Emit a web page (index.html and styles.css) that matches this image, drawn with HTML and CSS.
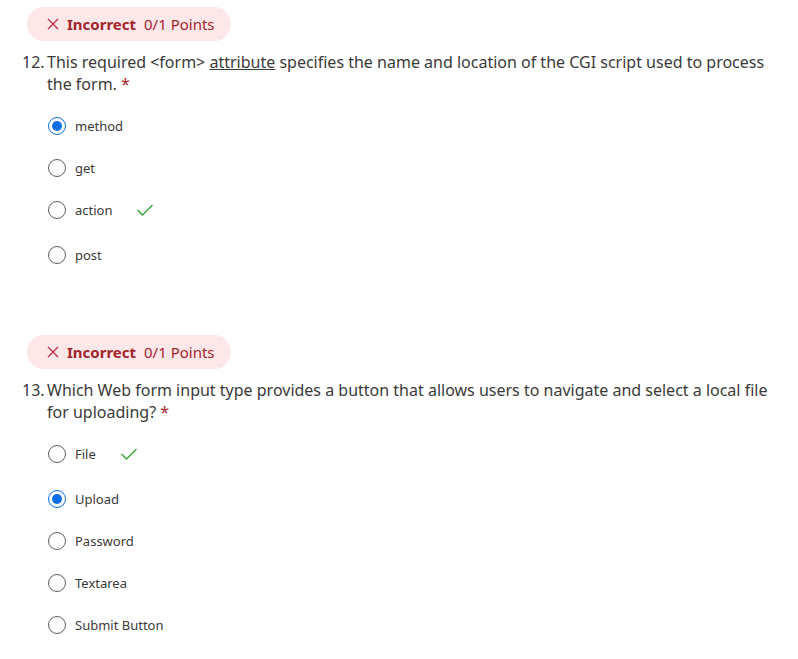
FILE: index.html
```html
<!DOCTYPE html>
<html>
<head>
<meta charset="utf-8">
<link rel="stylesheet" href="styles.css">
</head>
<body>
<div class="page">
  <section class="question">
    <div class="badge">
      <svg class="x-icon" width="12" height="12" viewBox="0 0 12 12"><path d="M1 1 L11 11 M11 1 L1 11" stroke="#c4314b" stroke-width="1.4" fill="none"/></svg>
      <span class="badge-strong">Incorrect</span>
      <span class="badge-points">0/1 Points</span>
    </div>
    <div class="qtext">
      <span class="qnum">12.</span>
      <span class="qbody">This required &lt;form&gt; <u>attribute</u> specifies the name and location of the CGI script used to process the form. <span class="req">*</span></span>
    </div>
    <div class="options">
      <div class="opt"><span class="radio checked"></span><span class="label">method</span></div>
      <div class="opt"><span class="radio"></span><span class="label">get</span></div>
      <div class="opt tall"><span class="radio"></span><span class="label">action</span><svg class="check" width="18" height="14" viewBox="0 0 18 14"><path d="M1.5 7 L6.5 12 L16.5 2" stroke="#3aa63a" stroke-width="1.4" fill="none"/></svg></div>
      <div class="opt"><span class="radio"></span><span class="label">post</span></div>
    </div>
  </section>
  <section class="question q2">
    <div class="badge">
      <svg class="x-icon" width="12" height="12" viewBox="0 0 12 12"><path d="M1 1 L11 11 M11 1 L1 11" stroke="#c4314b" stroke-width="1.4" fill="none"/></svg>
      <span class="badge-strong">Incorrect</span>
      <span class="badge-points">0/1 Points</span>
    </div>
    <div class="qtext">
      <span class="qnum">13.</span>
      <span class="qbody">Which Web form input type provides a button that allows users to navigate and select a local file for uploading? <span class="req">*</span></span>
    </div>
    <div class="options">
      <div class="opt tall"><span class="radio"></span><span class="label">File</span><svg class="check" width="18" height="14" viewBox="0 0 18 14"><path d="M1.5 7 L6.5 12 L16.5 2" stroke="#3aa63a" stroke-width="1.4" fill="none"/></svg></div>
      <div class="opt"><span class="radio checked"></span><span class="label">Upload</span></div>
      <div class="opt"><span class="radio"></span><span class="label">Password</span></div>
      <div class="opt"><span class="radio"></span><span class="label">Textarea</span></div>
      <div class="opt"><span class="radio"></span><span class="label">Submit Button</span></div>
    </div>
  </section>
</div>
</body>
</html>
```
FILE: styles.css
```css
html, body {
  margin: 0;
  padding: 0;
  background: #ffffff;
}
body {
  font-family: "Noto Sans", "Open Sans", sans-serif;
  color: #3b3a39;
}
.page {
  padding: 7px 20px 0 22px;
}
.question {
  display: flex;
  flex-direction: column;
}
.q2 {
  margin-top: 59px;
}
.badge {
  align-self: flex-start;
  margin-left: 5px;
  height: 34px;
  border-radius: 17px;
  background: #fde7e9;
  display: flex;
  align-items: center;
  padding: 0 16px 0 20px;
  font-size: 15px;
}
.x-icon {
  margin-right: 8px;
}
.badge-strong {
  font-weight: 700;
  color: #a4262c;
  margin-right: 8px;
}
.badge-points {
  color: #a4262c;
}
.qtext {
  display: flex;
  margin-top: 10px;
  font-size: 16px;
  line-height: 22px;
}
.qnum {
  width: 25px;
  flex: none;
}
.qbody {
  flex: 1;
}
.req {
  color: #a4262c;
}
.options {
  display: flex;
  flex-direction: column;
  margin-top: 10px;
  margin-left: 26px;
}
.opt {
  display: flex;
  align-items: center;
  height: 42px;
  font-size: 13px;
}
.opt.tall {
  padding-bottom: 3px;
}
.radio {
  width: 18px;
  height: 18px;
  box-sizing: border-box;
  border: 1px solid #605e5c;
  border-radius: 50%;
  flex: none;
  margin-right: 9px;
  position: relative;
}
.radio.checked {
  border-color: #0a6de6;
}
.radio.checked::after {
  content: "";
  position: absolute;
  left: 3px;
  top: 3px;
  width: 10px;
  height: 10px;
  border-radius: 50%;
  background: #0a6de6;
}
.check {
  margin-left: 24px;
}
```
